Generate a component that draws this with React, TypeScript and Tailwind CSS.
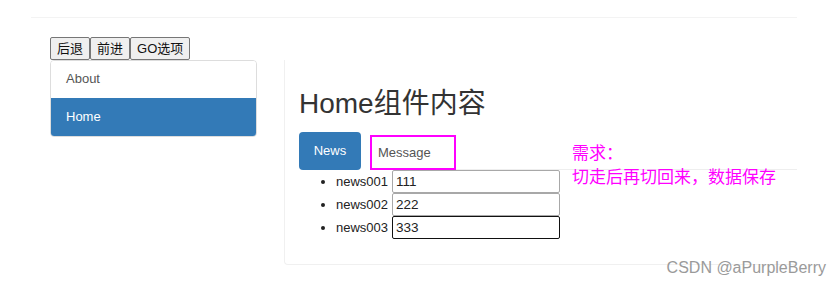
import { useState } from 'react';

const news = [
    { id: 'news001', value: '111' },
    { id: 'news002', value: '222' },
    { id: 'news003', value: '333' },
];

function NavButtons() {
    return (
        <div className="flex pl-[50px] pt-[19px]">
            {['后退', '前进', 'GO选项'].map((label) => (
                <button
                    key={label}
                    className="h-[23px] rounded-[2px] border border-[#767676] bg-[#efefef] px-[6px] text-[13px] leading-[21px] text-[#111]"
                >
                    {label}
                </button>
            ))}
        </div>
    );
}

function SideMenu() {
    return (
        <div className="w-[207px] self-start overflow-hidden rounded-[4px] border border-[#ddd] text-[13px]">
            <div className="h-[37px] bg-white pl-[15px] leading-[36px] text-[#555]">About</div>
            <div className="h-[38px] bg-[#337ab7] pl-[15px] leading-[38px] text-white">Home</div>
        </div>
    );
}

function HomePanel() {
    const [values, setValues] = useState(news.map((n) => n.value));

    return (
        <div className="ml-[27px] h-[205px] w-[513px] rounded-bl-[4px] border-b border-l border-[#f0f0f0] pl-[14px] pt-[28px]">
            <h3 className="text-[28px] leading-[32px] text-[#333]">Home组件内容</h3>
            <div className="mt-[12px] flex items-start">
                <div className="flex h-[38px] w-[62px] items-center justify-center rounded-[4px] bg-[#337ab7] text-[13px] text-white">
                    News
                </div>
                <div className="ml-[9px] mt-[3px] flex h-[35px] w-[86px] items-center border-2 border-[#ff00ff] pl-[6px] text-[13px] text-[#555]">
                    Message
                </div>
                <div className="h-[38px] flex-1 border-b border-[#eee]" />
            </div>
            <ul className="list-disc pl-[37px] text-[13px] text-[#222]">
                {news.map((n, i) => (
                    <li key={n.id} className="h-[23px] leading-[23px]">
                        <span className="mr-[4px]">{n.id}</span>
                        <input
                            value={values[i]}
                            onChange={(e) => setValues(values.map((v, j) => (j === i ? e.target.value : v)))}
                            className={`h-[23px] w-[168px] rounded-[2px] border px-[3px] align-top text-[13.5px] outline-none ${
                                i === 2 ? 'border-[#111]' : 'border-[#a8a8a8]'
                            }`}
                        />
                    </li>
                ))}
            </ul>
        </div>
    );
}

export default function App() {
    return (
        <div
            className="relative h-[285px] w-[840px] overflow-hidden bg-white"
            style={{ fontFamily: '"Liberation Sans", Arial, "Noto Sans CJK SC", sans-serif' }}
        >
            <div className="pl-[31px] pt-[17px]">
                <div className="h-px w-[766px] bg-[#f3f3f3]" />
            </div>
            <NavButtons />
            <div className="flex pl-[50px]">
                <SideMenu />
                <HomePanel />
            </div>

            <div
                className="absolute left-[572px] top-[140px] text-[17px] leading-[24px] text-[#ff00ff]"
                style={{ fontFamily: '"Noto Sans CJK SC", sans-serif' }}
            >
                <p>需求：</p>
                <p>切走后再切回来，数据保存</p>
            </div>

            <div className="absolute right-[14px] top-[256px] text-[16px] text-[#9a9a9a]">CSDN @aPurpleBerry</div>
        </div>
    );
}
